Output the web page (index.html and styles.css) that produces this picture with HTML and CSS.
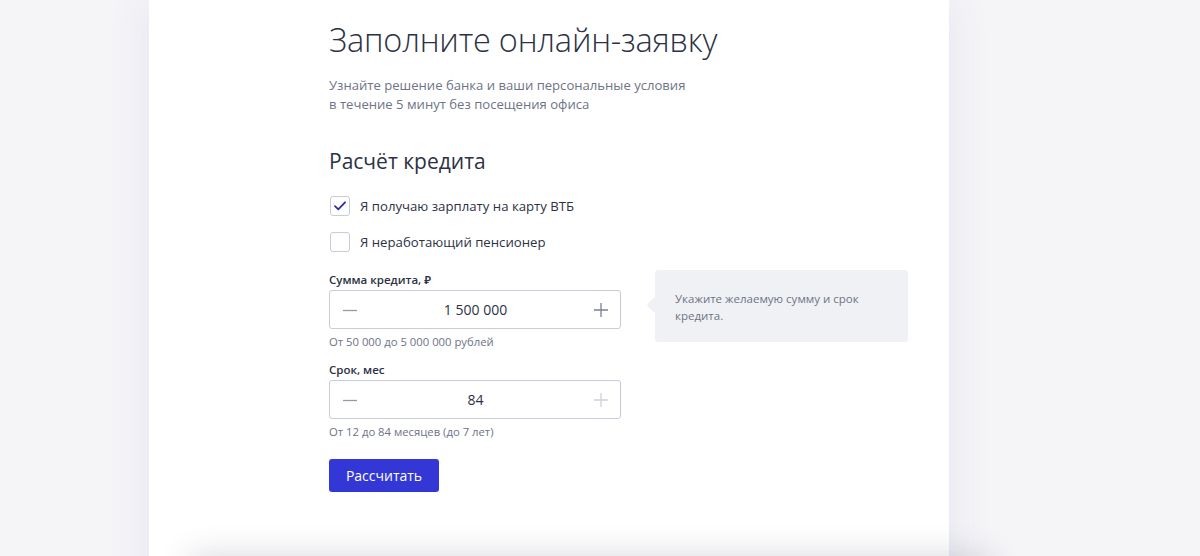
FILE: index.html
```html
<!DOCTYPE html>
<html lang="ru">
<head>
<meta charset="utf-8">
<title>Заполните онлайн-заявку</title>
<link rel="stylesheet" href="styles.css">
</head>
<body>
<div class="page">
  <main class="card">
    <div class="content">
      <h1 class="title">Заполните онлайн-заявку</h1>
      <p class="subtitle">Узнайте решение банка и ваши персональные условия<br>в течение 5 минут без посещения офиса</p>
      <h2 class="section">Расчёт кредита</h2>
      <label class="check first">
        <span class="box checked"><svg width="12" height="10" viewBox="0 0 12 10"><path d="M1 5.2 L4.3 8.4 L11 1.3" fill="none" stroke="#2b2f9e" stroke-width="1.8" stroke-linecap="round" stroke-linejoin="round"/></svg></span>
        <span class="check-text">Я получаю зарплату на карту ВТБ</span>
      </label>
      <label class="check">
        <span class="box"></span>
        <span class="check-text">Я неработающий пенсионер</span>
      </label>
      <div class="calc">
        <div class="fields">
          <div class="field">
            <div class="label">Сумма кредита, ₽</div>
            <div class="stepper">
              <span class="btn-step"><svg width="14" height="14" viewBox="0 0 14 14"><path d="M0 7.5 H14" stroke="#9599ac" stroke-width="1.3"/></svg></span>
              <span class="value">1 500 000</span>
              <span class="btn-step"><svg width="14" height="14" viewBox="0 0 14 14"><path d="M0 7 H14 M7 0 V14" stroke="#7a7f94" stroke-width="1.3"/></svg></span>
            </div>
            <div class="hint">От 50 000 до 5 000 000 рублей</div>
          </div>
          <div class="field">
            <div class="label">Срок, мес</div>
            <div class="stepper">
              <span class="btn-step"><svg width="14" height="14" viewBox="0 0 14 14"><path d="M0 7.5 H14" stroke="#9599ac" stroke-width="1.3"/></svg></span>
              <span class="value">84</span>
              <span class="btn-step"><svg width="14" height="14" viewBox="0 0 14 14"><path d="M0 7 H14 M7 0 V14" stroke="#d0d2dc" stroke-width="1.3"/></svg></span>
            </div>
            <div class="hint">От 12 до 84 месяцев (до 7 лет)</div>
          </div>
          <button class="submit">Рассчитать</button>
        </div>
        <div class="tip">Укажите желаемую сумму и срок кредита.</div>
      </div>
    </div>
  </main>
  <div class="next"></div>
</div>
</body>
</html>
```
FILE: styles.css
```css
* { box-sizing: border-box; }
html, body { margin: 0; padding: 0; }
body {
  background: #f5f5f8;
  font-family: "Open Sans", "Noto Sans", sans-serif;
  color: #2c3244;
  overflow: hidden;
  height: 556px;
}
.page {
  position: relative;
  width: 1200px;
  height: 556px;
  overflow: hidden;
}
.card {
  margin-left: 149px;
  width: 800px;
  height: 600px;
  background: #fff;
  box-shadow: 0 0 40px rgba(70, 70, 150, 0.10);
  padding-left: 180px;
  padding-top: 18px;
}
.content { width: 580px; }
.title {
  margin: 0;
  font-size: 32.5px;
  font-weight: 300;
  line-height: 44px;
  color: #2c3244;
  letter-spacing: -0.2px;
}
.subtitle {
  margin: 14px 0 0;
  font-size: 13.1px;
  line-height: 19px;
  color: #6e7386;
}
.section {
  margin: 32px 0 0;
  font-size: 21px;
  font-weight: 400;
  line-height: 30px;
  color: #2c3244;
}
.check {
  display: flex;
  align-items: center;
  gap: 10px;
  height: 20px;
  margin-top: 16px;
}
.check.first { margin-top: 20px; }
.box {
  width: 20px;
  height: 20px;
  border: 1px solid #c8cbd8;
  border-radius: 3px;
  display: flex;
  align-items: center;
  justify-content: center;
  margin-left: 1px;
}
.check-text {
  font-size: 13.2px;
  color: #2c3244;
}
.calc {
  display: flex;
  gap: 34px;
  margin-top: 19px;
}
.fields { width: 292px; }
.field { margin-bottom: 11px; }
.field + .field { margin-bottom: 19px; }
.label {
  font-size: 11.5px;
  font-weight: 600;
  line-height: 18px;
  color: #2c3244;
}
.stepper {
  margin-top: 1px;
  height: 39px;
  border: 1px solid #c8cbd8;
  border-radius: 3px;
  display: flex;
  align-items: center;
  justify-content: space-between;
  padding: 0 12px 0 13px;
}
.btn-step { display: flex; width: 14px; height: 14px; }
.value {
  font-size: 14px;
  color: #2c3244;
}
.hint {
  margin-top: 5px;
  font-size: 11.3px;
  line-height: 16px;
  color: #6e7386;
}
.submit {
  display: block;
  width: 110px;
  height: 33px;
  border: none;
  border-radius: 3px;
  background: #3337d6;
  color: #fff;
  font-family: inherit;
  font-size: 14px;
  padding: 0;
}
.tip {
  position: relative;
  align-self: flex-start;
  width: 253px;
  height: 72px;
  margin-top: -1px;
  background: #f0f1f4;
  border-radius: 3px;
  padding: 20px 20px 0;
  font-size: 11.5px;
  line-height: 17px;
  color: #6e7386;
}
.tip::before {
  content: "";
  position: absolute;
  left: -6px;
  top: 29px;
  width: 12px;
  height: 12px;
  background: #f0f1f4;
  transform: rotate(45deg);
  border-radius: 2px;
}
.next {
  position: absolute;
  left: 190px;
  top: 560px;
  width: 800px;
  height: 100px;
  background: #fff;
  box-shadow: 0 -4px 30px rgba(40, 40, 70, 0.18);
}
```
